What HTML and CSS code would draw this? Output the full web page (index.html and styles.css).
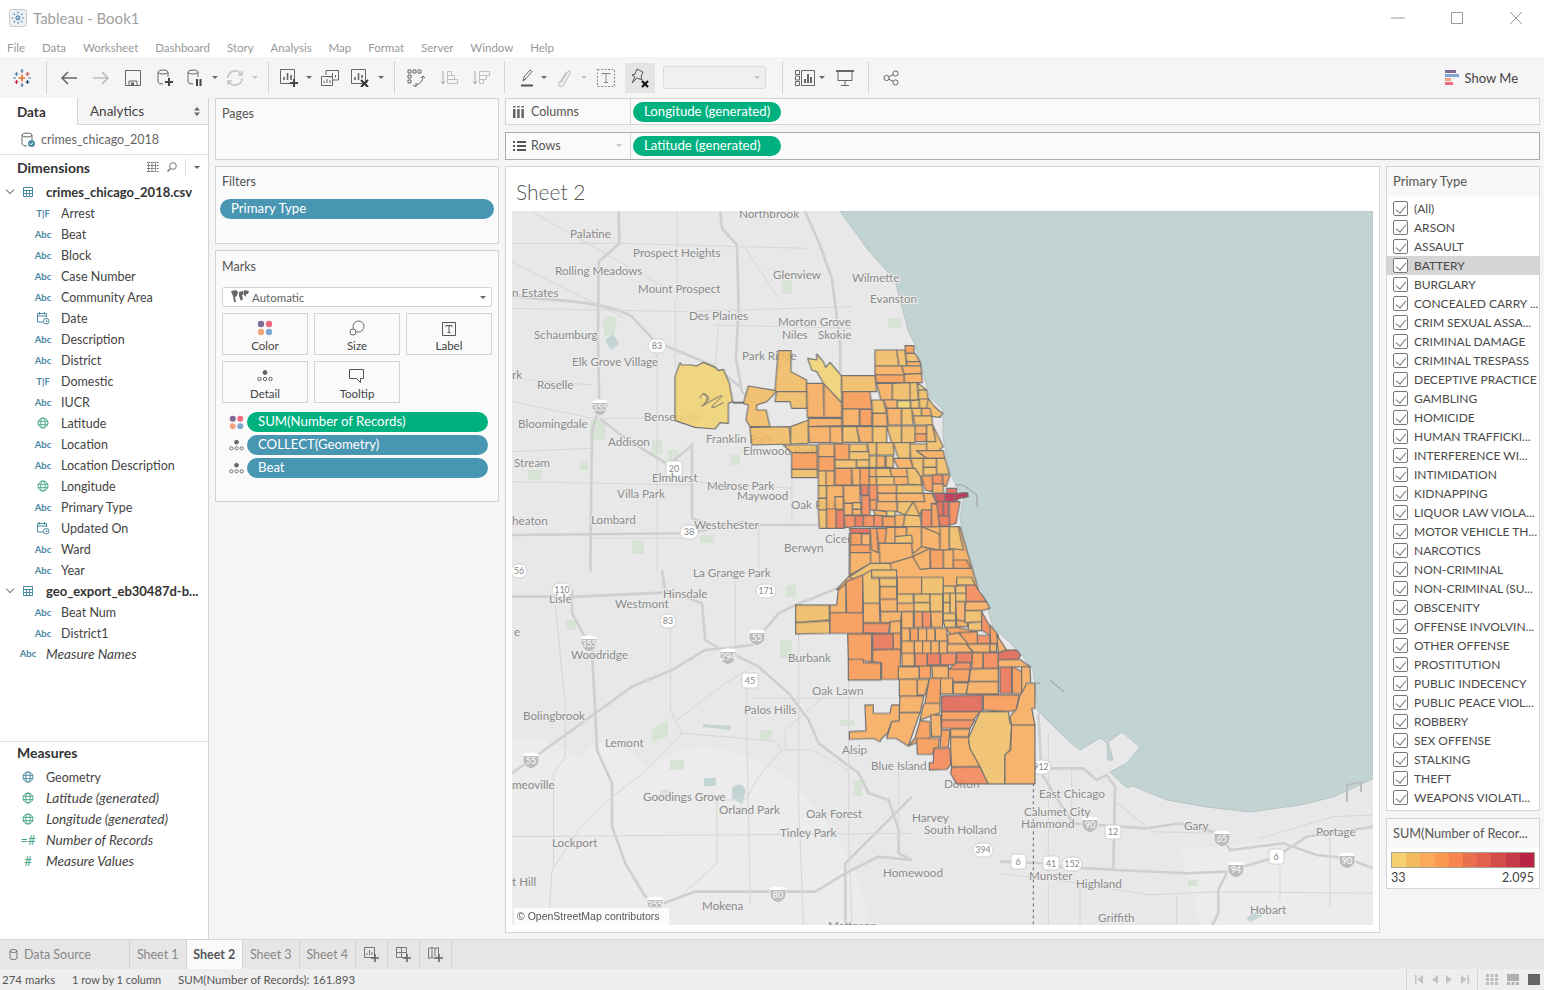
FILE: index.html
```html
<!DOCTYPE html>
<html lang="en">
<head>
    <meta charset="UTF-8">
    <title>Tableau - Book1</title>
    <link rel="stylesheet" href="styles.css">
</head>
<body>
<svg class="defs" width="0" height="0">
    <symbol id="dots" viewBox="0 0 16 16">
        <circle cx="4" cy="4" r="3.2" fill="#7f6a97"/><circle cx="12" cy="4" r="3.2" fill="#ef6a7f"/>
        <circle cx="4" cy="12" r="3.2" fill="#f2a57c"/><circle cx="12" cy="12" r="3.2" fill="#7ea6d1"/>
    </symbol>
    <symbol id="detail" viewBox="0 0 16 16" fill="none" stroke="#666">
        <circle cx="8" cy="4.5" r="2" fill="#666"/>
        <circle cx="2.5" cy="11" r="1.7"/><circle cx="8" cy="11" r="1.7"/><circle cx="13.5" cy="11" r="1.7"/>
    </symbol>
    <symbol id="globe" viewBox="0 0 12 12" fill="none" stroke="currentColor" stroke-width="1">
        <circle cx="6" cy="6" r="5"/><ellipse cx="6" cy="6" rx="2.2" ry="5"/><path d="M1 4.3h10M1 7.7h10"/>
    </symbol>
    <symbol id="cal" viewBox="0 0 14 14" fill="none" stroke="#4b8aa3" stroke-width="1">
        <path d="M7 11H1.5V2.5h9V6M1.5 5h9M3.5 1v2.5M8.5 1v2.5"/><circle cx="10.2" cy="10.2" r="2.8"/><path d="M10.2 8.8v1.6h1.4"/>
    </symbol>
    <symbol id="tbl" viewBox="0 0 12 12" fill="none" stroke="#4b8aa3">
        <path d="M1.5 1.5h9v9h-9zM1.5 4.5h9M1.5 7.5h9M4.5 4.5v6M7.5 4.5v6"/>
    </symbol>
    <symbol id="int" viewBox="0 0 18 18">
        <path d="M1 3 Q9 0 17 3 L17 10 Q17 15 9 18 Q1 15 1 10Z" fill="#bdbdbd" stroke="#f2f2f2"/>
        <path d="M1.5 3 Q9 .5 16.500 3 V5 H1.500Z" fill="#fff"/>
    </symbol>
</svg>

<header class="titlebar">
    <svg class="app-icon" viewBox="0 0 18 18" width="18" height="18">
        <rect x=".5" y=".5" width="17" height="17" rx="2" fill="#eef1f4" stroke="#c9c9c9"/>
        <path d="M9 2.500v13M2.500 9h13M4.500 4.500l9 9M13.500 4.500l-9 9" stroke="#5b8fb5" stroke-width="1.200" stroke-dasharray="2 1.500"/>
    </svg>
    <span class="app-title">Tableau - Book1</span>
    <div class="win-btns">
        <svg viewBox="0 0 14 14" width="14" height="14"><path d="M0 7h14" stroke="#999"/></svg>
        <svg viewBox="0 0 14 14" width="14" height="14"><path d="M1.500 1.500h11v11h-11z" fill="none" stroke="#999"/></svg>
        <svg viewBox="0 0 14 14" width="14" height="14"><path d="M1 1l12 12M13 1L1 13" stroke="#999"/></svg>
    </div>
</header>

<nav class="menubar">
    <span>File</span><span>Data</span><span>Worksheet</span><span>Dashboard</span><span>Story</span><span>Analysis</span><span>Map</span><span>Format</span><span>Server</span><span>Window</span><span>Help</span>
</nav>

<div class="toolbar">
    <div class="tb w30">
        <svg viewBox="0 0 18 18" width="18" height="18" stroke-width="1.200">
            <path d="M9 5.500v7M5.500 9h7" stroke="#e8762c" stroke-width="1.600"/>
            <path d="M9 0v4M7.500 2h3M9 14v4M7.500 16h3" stroke="#5b7fa6"/>
            <path d="M3.500 3v4M1.500 5h4" stroke="#59879b"/><path d="M14.500 3v4M12.500 5h4" stroke="#d24b55"/>
            <path d="M3.500 11v4M1.500 13h4" stroke="#c72035"/><path d="M14.500 11v4M12.500 13h4" stroke="#1f447a"/>
            <path d="M0 9h3M15 9h3" stroke="#4f7fa8"/>
        </svg>
    </div>
    <i class="sep s1"></i>
    <div class="tb w32"><svg viewBox="0 0 18 16" width="18" height="16"><path d="M17 8H2M8 2L2 8l6 6" fill="none" stroke="#666" stroke-width="1.600"/></svg></div>
    <div class="tb w32"><svg viewBox="0 0 18 16" width="18" height="16"><path d="M1 8h15M10 2l6 6-6 6" fill="none" stroke="#bbb" stroke-width="1.600"/></svg></div>
    <div class="tb w32"><svg viewBox="0 0 16 16" width="16" height="16"><path d="M.5.500h15v15H.5zM4 15.500V11h8v4.500" fill="none" stroke="#666"/><rect x="6" y="12.500" width="3" height="3" fill="#666"/></svg></div>
    <div class="tb w32"><svg viewBox="0 0 16 18" width="16" height="18" fill="none" stroke="#666"><ellipse cx="6" cy="3" rx="5" ry="2"/><path d="M1 3v10q0 2 5 2M11 3v5"/><path d="M12 9v8M8 13h8" stroke="#444" stroke-width="2"/></svg></div>
    <div class="tb w28"><svg viewBox="0 0 16 18" width="16" height="18" fill="none" stroke="#666"><ellipse cx="6" cy="3" rx="5" ry="2"/><path d="M1 3v10q0 2 5 2M11 3v5"/><path d="M10 10v7M13.500 10v7" stroke="#444" stroke-width="2"/></svg></div>
    <div class="tb w12"><i class="caret"></i></div>
    <div class="tb w28"><svg viewBox="0 0 18 18" width="18" height="18" fill="none" stroke="#c4c4c4" stroke-width="1.500"><path d="M2 9a7 7 0 0 1 12-5l2 2M16 9a7 7 0 0 1-12 5l-2-2M16 2v4h-4M2 16v-4h4"/></svg></div>
    <div class="tb w12"><i class="caret off"></i></div>
    <i class="sep s2"></i>
    <div class="tb w32"><svg viewBox="0 0 18 18" width="18" height="18" fill="none" stroke="#666"><path d="M.5.500h14v14H.5z"/><path d="M4 11V8M7.500 11V4M11 11V6" stroke-width="1.600"/><path d="M14 10v8M10 14h8" stroke="#444" stroke-width="2"/></svg></div>
    <div class="tb w8"><i class="caret"></i></div>
    <div class="tb w34"><svg viewBox="0 0 18 16" width="18" height="16" fill="none" stroke="#666"><path d="M5 5V.500h12.500V10H12"/><path d="M.5 6.500h11v9H.5z" fill="#f5f5f5"/><path d="M3 13v-2M6 13v-4M9 13v-3M9 8V6M11.500 7.500V3M14.500 7.500V5"/></svg></div>
    <div class="tb w26"><svg viewBox="0 0 18 18" width="18" height="18" fill="none" stroke="#666"><path d="M.5.500h14v14H.5z"/><path d="M4 11V8M7.500 11V4M11 9V6" stroke-width="1.600"/><path d="M10 11l7 7M17 11l-7 7" stroke="#333" stroke-width="2"/></svg></div>
    <div class="tb w16"><i class="caret"></i></div>
    <i class="sep s3"></i>
    <div class="tb w32"><svg viewBox="0 0 18 18" width="18" height="18" fill="none" stroke="#666"><path d="M1 1h3v3H1zM6 1h3v3H6zM11 1h3v3h-3zM1 6h3v3H1zM1 11h3v3H1z"/><path d="M16 7q0 7-7 9M6 16l3 2v-4M14 9l2-2 2 2"/></svg></div>
    <div class="tb w33"><svg viewBox="0 0 18 16" width="18" height="16" fill="none" stroke="#c0c0c0"><path d="M3 1v13M1 11l2 3 2-3" stroke="#aaa"/><path d="M7.500 1.500h4v4h-4zM7.500 5.500h7v4h-7zM7.500 9.500h10v4h-10z"/></svg></div>
    <div class="tb w32"><svg viewBox="0 0 18 16" width="18" height="16" fill="none" stroke="#c0c0c0"><path d="M3 1v13M1 11l2 3 2-3" stroke="#aaa"/><path d="M7.500 1.500h10v4h-10zM7.500 5.500h7v4h-7zM7.500 9.500h4v4h-4z"/></svg></div>
    <i class="sep s4"></i>
    <div class="tb w28"><svg viewBox="0 0 14 18" width="14" height="18" fill="none" stroke="#666"><path d="M3 12l1-4 6-7 2 1.500-6 7zM3 12l3-2.500"/><path d="M1 16.500h12" stroke="#555" stroke-width="2"/></svg></div>
    <div class="tb w6"><i class="caret"></i></div>
    <div class="tb w34"><svg viewBox="0 0 14 18" width="14" height="18" fill="none" stroke="#c4c4c4" stroke-width="1.200"><path d="M4 14l6-10q2-3 3-1.500t-1 4l-6 10q-3 2-4 0t1-4l6-9"/></svg></div>
    <div class="tb w6"><i class="caret off"></i></div>
    <div class="tb w38"><svg viewBox="0 0 18 18" width="18" height="18" fill="none" stroke="#888"><path d="M.5.500h17v17H.5z" stroke-dasharray="2 1.500"/><path d="M5 5.500v-1h8v1M9 4.500v9M7 13.500h4"/></svg></div>
    <div class="tb w30 picked"><svg viewBox="0 0 20 20" width="20" height="20" fill="none" stroke="#555"><path d="M7 1l6 3-2 5 1 3-5-2-5 5 3-6-3-2 3-1z"/><path d="M12 13l6 6M18 13l-6 6" stroke="#111" stroke-width="2.200"/></svg></div>
    <div class="fit-select"><i class="caret off"></i></div>
    <i class="sep s5"></i>
    <div class="tb w28"><svg viewBox="0 0 20 16" width="20" height="16" fill="none" stroke="#666"><path d="M.5.500h4v4h-4zM.5 6h4v4h-4zM.5 11.500h4v4h-4zM6.500.5h13v15h-13z"/><path d="M10 13V9M13 13V4M16 13V7" stroke-width="2"/></svg></div>
    <div class="tb w6"><i class="caret"></i></div>
    <div class="tb w22 ml9"><svg viewBox="0 0 18 16" width="18" height="16" fill="none" stroke="#666"><path d="M0 1h18" stroke-width="2"/><path d="M2 1v9.500h14V1M9 10.500V15M5 15.500h8"/></svg></div>
    <i class="sep s6"></i>
    <div class="tb w30"><svg viewBox="0 0 16 16" width="16" height="16" fill="none" stroke="#666"><circle cx="3.500" cy="8" r="2.600"/><circle cx="12.500" cy="3.500" r="2.600"/><circle cx="12.500" cy="12.500" r="2.600"/><path d="M5.800 6.800l4.400-2.200M5.800 9.200l4.400 2.200"/></svg></div>
    <div class="show-me">
        <svg viewBox="0 0 14 15" width="14" height="15"><rect width="11" height="3" fill="#7f6a97"/><rect y="4" width="14" height="3" fill="#7ea6d1"/><rect y="8" width="6" height="3" fill="#f2a57c"/><rect y="12" width="8" height="3" fill="#ef6a7f"/></svg>
        <span>Show Me</span>
    </div>
</div>

<div class="workspace">
    <aside class="side">
        <div class="side-tabs">
            <span class="side-tab active">Data</span>
            <span class="side-tab">Analytics
                <svg class="updown" viewBox="0 0 6 9" width="6" height="9" fill="#666"><path d="M3 0l3 3.500H0zM3 9L0 5.500h6z"/></svg>
            </span>
        </div>
        <div class="source">
            <svg viewBox="0 0 14 15" width="14" height="15" fill="none" stroke="#666"><ellipse cx="6" cy="3" rx="5" ry="2"/><path d="M1 3v9q0 2 5 2M11 3v5"/><circle cx="10.500" cy="11.500" r="3.500" fill="#4b8aa3" stroke="none"/><path d="M8.800 11.500l1.200 1.300 2-2.300" stroke="#fff"/></svg>
            <span>crimes_chicago_2018</span>
        </div>
        <div class="pane-head">
            <b>Dimensions</b>
            <svg class="pane-ico" viewBox="0 0 12 10" width="12" height="10" fill="none" stroke="#777"><path d="M0 .5h12M0 3.500h12M0 6.500h12M0 9.500h12M1.500 0v10M5 0v10M8.500 0v10" stroke-dasharray="1.500 .5"/></svg>
            <svg class="pane-ico" viewBox="0 0 10 10" width="10" height="10" fill="none" stroke="#777"><circle cx="6" cy="4" r="3.300"/><path d="M3.500 6.500L.5 9.500" stroke-width="1.500"/></svg>
            <i class="pane-sep"></i>
            <i class="caret"></i>
        </div>
        <ul class="tree dims">
            <li class="group"><i class="chev"></i><svg class="grp-ico"><use href="#tbl"/></svg><span>crimes_chicago_2018.csv</span></li>
            <li><em class="typ">T|F</em><span>Arrest</span></li>
            <li><em class="typ">Abc</em><span>Beat</span></li>
            <li><em class="typ">Abc</em><span>Block</span></li>
            <li><em class="typ">Abc</em><span>Case Number</span></li>
            <li><em class="typ">Abc</em><span>Community Area</span></li>
            <li><em class="typ"><svg class="typ-ico"><use href="#cal"/></svg></em><span>Date</span></li>
            <li><em class="typ">Abc</em><span>Description</span></li>
            <li><em class="typ">Abc</em><span>District</span></li>
            <li><em class="typ">T|F</em><span>Domestic</span></li>
            <li><em class="typ">Abc</em><span>IUCR</span></li>
            <li><em class="typ geo"><svg class="typ-ico small"><use href="#globe"/></svg></em><span>Latitude</span></li>
            <li><em class="typ">Abc</em><span>Location</span></li>
            <li><em class="typ">Abc</em><span>Location Description</span></li>
            <li><em class="typ geo"><svg class="typ-ico small"><use href="#globe"/></svg></em><span>Longitude</span></li>
            <li><em class="typ">Abc</em><span>Primary Type</span></li>
            <li><em class="typ"><svg class="typ-ico"><use href="#cal"/></svg></em><span>Updated On</span></li>
            <li><em class="typ">Abc</em><span>Ward</span></li>
            <li><em class="typ">Abc</em><span>Year</span></li>
            <li class="group"><i class="chev"></i><svg class="grp-ico"><use href="#tbl"/></svg><span>geo_export_eb30487d-b...</span></li>
            <li><em class="typ">Abc</em><span>Beat Num</span></li>
            <li><em class="typ">Abc</em><span>District1</span></li>
            <li class="top gen"><em class="typ">Abc</em><span>Measure Names</span></li>
        </ul>
        <div class="pane-head measures"><b>Measures</b></div>
        <ul class="tree meas">
            <li class="top"><em class="typ"><svg class="typ-ico small"><use href="#globe"/></svg></em><span>Geometry</span></li>
            <li class="top gen"><em class="typ geo"><svg class="typ-ico small"><use href="#globe"/></svg></em><span>Latitude (generated)</span></li>
            <li class="top gen"><em class="typ geo"><svg class="typ-ico small"><use href="#globe"/></svg></em><span>Longitude (generated)</span></li>
            <li class="top gen"><em class="typ geo big-sym">=#</em><span>Number of Records</span></li>
            <li class="top gen"><em class="typ geo big-sym">#</em><span>Measure Values</span></li>
        </ul>
    </aside>

    <section class="cards">
        <div class="card pages"><h4>Pages</h4></div>
        <div class="card filters">
            <h4>Filters</h4>
            <div class="pill blue">Primary Type</div>
        </div>
        <div class="card marks">
            <h4>Marks</h4>
            <div class="mark-type">
                <svg viewBox="0 0 18 14" width="18" height="14" fill="#666"><path d="M0 1l5-1 2 2-1 4-2 1 1 5-2 0-1-6zM8 2l4-1 1 3-2 1 1 4-2 2-2-5zM13 0l5 1-1 3-2 0 0 3-2-2z"/></svg>
                <span>Automatic</span>
                <i class="caret"></i>
            </div>
            <div class="mark-btns">
                <div class="mark-btn"><svg viewBox="0 0 16 16" width="16" height="16"><use href="#dots"/></svg><span>Color</span></div>
                <div class="mark-btn"><svg viewBox="0 0 16 16" width="16" height="16" fill="none" stroke="#666"><circle cx="9.500" cy="6.500" r="5.500"/><circle cx="4" cy="12" r="3" fill="#fafafa"/></svg><span>Size</span></div>
                <div class="mark-btn"><svg viewBox="0 0 14 14" width="14" height="14" fill="none" stroke="#555"><path d="M.5.500h13v13H.5zM4 5V3.500h6V5M7 3.500v7M5.500 10.500h3"/></svg><span>Label</span></div>
                <div class="mark-btn"><svg viewBox="0 0 16 16" width="16" height="16"><use href="#detail"/></svg><span>Detail</span></div>
                <div class="mark-btn"><svg viewBox="0 0 16 16" width="16" height="16" fill="none" stroke="#555"><path d="M.5 1.500h14v9h-3v4l-4-4h-7z"/></svg><span>Tooltip</span></div>
            </div>
            <div class="mark-row"><svg viewBox="0 0 16 16" width="15" height="15"><use href="#dots"/></svg><div class="pill green">SUM(Number of Records)</div></div>
            <div class="mark-row"><svg viewBox="0 0 16 16" width="15" height="15"><use href="#detail"/></svg><div class="pill blue">COLLECT(Geometry)</div></div>
            <div class="mark-row"><svg viewBox="0 0 16 16" width="15" height="15"><use href="#detail"/></svg><div class="pill blue">Beat</div></div>
        </div>
    </section>

    <section class="view">
        <div class="shelf">
            <div class="shelf-label">
                <svg viewBox="0 0 11 12" width="11" height="12" fill="#666"><path d="M0 3h2.500v9H0zM4.200 3h2.500v9H4.200zM8.400 3h2.500v9H8.400zM0 0h2.500v1.500H0zM4.200 0h2.500v1.500H4.200zM8.400 0h2.500v1.500H8.400z"/></svg>
                <span>Columns</span>
            </div>
            <div class="pill green">Longitude (generated)</div>
        </div>
        <div class="shelf rows">
            <div class="shelf-label">
                <svg viewBox="0 0 13 10" width="13" height="10" fill="#555"><path d="M0 0h2v2H0zM0 4h2v2H0zM0 8h2v2H0zM4 0h9v2H4zM4 4h9v2H4zM4 8h9v2H4z"/></svg>
                <span>Rows</span>
                <i class="caret off"></i>
            </div>
            <div class="pill green">Latitude (generated)</div>
        </div>
        <div class="canvas">
            <div class="sheet">
                <h2>Sheet 2</h2>
                <svg class="map" viewBox="512 211 861 714" width="861" height="714">
                    <rect x="512" y="211" width="861" height="714" fill="#e8e8e8"/>
                    <g fill="#ececec">
                        <path d="M512 740Q540 730 580 760 600 720 650 770 700 720 790 780 860 850 870 925H512Z"/>
                        <path d="M1180 850Q1290 840 1373 830V925H1200Z"/>
                    </g>
                    <g fill="#d7e3d4">
                        <path d="M603 320q8-8 14 0l-3 16-10 0zM632 540h12v14h-12zM786 585h10v12h-10zM700 535h14v8h-14zM668 450h10v18h-10zM730 455h10v10h-10zM652 440h10v14h-10zM580 460h8v10h-8zM760 730h12v10h-12zM660 790h10v10h-10zM854 780h8v16h-8zM840 720h14v6h-14zM652 730l16-10v16l-16 6zM670 760h14v10h-14zM528 470h14v10h-14zM590 420h16v20h-16zM888 318h14v10h-14zM782 280h10v14h-10zM566 620h10v10h-10zM780 640h12v18h-12zM1188 880h10v6h-10z"/>
                    </g>
                    <g fill="#c3d4d4">
                        <path d="M605 340l8-6 6 10-8 6zM703 724l28 2 0 4-28-3zM704 778h12v8h-12zM732 788q8-8 14 2l-4 14-10-6z"/>
                        <path d="M1246 918q12-8 22-12l-6 10-12 6z"/>
                    </g>
                    <path class="water" d="M840 211 868 250 895 280 908 330 915 345 930 397 943 410 943 437 950 473 957 487 964 497 960 517 962 530 965 560 970 570 983 593 993 627 1007 640 1020 653 1033 670 1037 703 1037 710 1050 723 1070 742 1080 750 1100 738 1107 743 1108 760 1113 760 1108 742 1122 732 1140 747 1127 763 1110 772 1127 788 1133 786 1167 800 1207 807 1250 812 1300 805 1333 797 1373 779 1373 211Z"/>
                    <path class="pier" d="M1347 802v-17l14-3v10"/>

                    <g class="roads" transform="translate(512 205) scale(.3333)">
                        <path class="hw" d="M0 275C150 285 300 295 360 335L430 410 600 480 690 550"/>
                        <path class="hw" d="M320 20 322 115 260 170 258 400 262 600 240 680 235 1100"/>
                        <path class="hw" d="M625 20 630 70 675 120 680 300 672 460 690 560 720 590"/>
                        <path class="hw" d="M262 640 340 700 470 780 540 720 540 940 600 960 920 960"/>
                        <path class="hw" d="M0 990 530 985 700 950"/>
                        <path class="hw" d="M880 20 920 110 960 220 985 420 985 500"/>
                        <path class="rd" d="M0 115H310M320 115 880 130M0 310 520 320 1020 305M0 170 340 340M60 20 480 260M490 290V490M435 400V1100M0 520 240 540M600 360 1020 370M0 830 540 840M700 130 800 280M495 20V280M0 590 240 640 430 640M240 1000H540M0 740 240 730M620 360 610 480 660 580M550 830 840 850M840 760V960M740 960V1100"/>
                    </g>
                    <g class="roads" transform="translate(512 570) scale(.3333)">
                        <path class="hw" d="M0 610 250 430 360 350 480 300 580 240 640 235 720 225 800 130 850 105 990 50"/>
                        <path class="hw" d="M240 240 250 430 255 540 300 640 300 770 340 880 400 980 440 1010"/>
                        <path class="hw" d="M640 240 740 290 830 370 890 450 920 520 1000 580 1040 610 1070 670 1130 690 1160 780 1160 850 1200 870"/>
                        <path class="hw" d="M440 1005 550 965 910 965 1000 910 1100 860 1200 870"/>
                        <path class="hw" d="M180 60 180 130 240 240M0 80H200L450 68M450 0 460 60 570 100 580 210 620 235M1000 1060V880L1200 680"/>
                        <path class="rd" d="M475 130V420L510 490 700 505 790 515 810 540 900 540 1010 600M510 490 380 620 300 680 200 780 120 900 110 1060M860 190V700L875 1070M705 340V520L715 1000M1010 190V800L1020 1070M615 690V880L510 975M0 800 615 795 1200 790M810 540 740 620 700 690 610 690M495 450 640 340 720 290M130 110 160 400 160 560 125 610V900M720 385H1200M820 530V480L930 385M450 0V60M670 20V230M1160 600V800"/>
                    </g>
                    <g class="roads" transform="translate(1000 700) scale(.3333)">
                        <path class="hw" d="M115 40 125 220 180 310 220 370 440 385 540 370 660 400 690 450 850 430 950 465 1040 475 1120 505"/>
                        <path class="hw" d="M125 205H250L290 240 320 225 345 260 340 510"/>
                        <path class="hw" d="M0 485 130 490 170 500 350 510 560 520 680 515 830 470 920 410 1120 380"/>
                        <path class="hw" d="M680 520 655 570V640L635 680"/>
                        <path class="rd" d="M0 520 240 550 450 585 650 575 1120 580M215 210V350M240 550V680M145 100V680M340 300 440 380M780 415 1000 350 1120 345M450 395 660 400M840 500V600M530 590V680M990 400V620"/>
                        <path class="state" d="M100 250V680"/>
                    </g>

                    <g class="shields">
                        <use href="#int" x="591" y="398" width="18" height="18"/><text class="on-int" x="600" y="411">355</text>
                        <use href="#int" x="580" y="634" width="18" height="18"/><text class="on-int" x="589" y="647">355</text>
                        <use href="#int" x="748" y="628" width="18" height="18"/><text class="on-int" x="757" y="641">55</text>
                        <use href="#int" x="718" y="647" width="20" height="18"/><text class="on-int" x="728" y="660">294</text>
                        <use href="#int" x="522" y="751" width="18" height="18"/><text class="on-int" x="531" y="764">55</text>
                        <use href="#int" x="646" y="895" width="18" height="18"/><text class="on-int" x="655" y="908">355</text>
                        <use href="#int" x="769" y="885" width="18" height="18"/><text class="on-int" x="778" y="898">80</text>
                        <use href="#int" x="1081" y="815" width="18" height="18"/><text class="on-int" x="1090" y="828">90</text>
                        <use href="#int" x="1213" y="829" width="18" height="18"/><text class="on-int" x="1222" y="842">65</text>
                        <use href="#int" x="1227" y="860" width="18" height="18"/><text class="on-int" x="1236" y="873">94</text>
                        <use href="#int" x="1338" y="851" width="18" height="18"/><text class="on-int" x="1347" y="864">90</text>
                        <rect x="648" y="339" width="18" height="14" rx="7"/><text x="657" y="349">83</text>
                        <rect x="666" y="461" width="16" height="15" rx="2"/><text x="674" y="472">20</text>
                        <rect x="680" y="525" width="18" height="14" rx="7"/><text x="689" y="535">38</text>
                        <rect x="511" y="564" width="16" height="14" rx="7"/><text x="519" y="574">56</text>
                        <rect x="552" y="583" width="20" height="14" rx="7"/><text x="562" y="593">110</text>
                        <rect x="756" y="584" width="20" height="14" rx="7"/><text x="766" y="594">171</text>
                        <rect x="660" y="614" width="16" height="14" rx="7"/><text x="668" y="624">83</text>
                        <rect x="742" y="673" width="16" height="15" rx="2"/><text x="750" y="684">45</text>
                        <rect x="973" y="843" width="20" height="14" rx="7"/><text x="983" y="853">394</text>
                        <rect x="1032" y="760" width="19" height="14" rx="7"/><text x="1041" y="770">912</text>
                        <rect x="1105" y="825" width="16" height="14" rx="3"/><text x="1113" y="835">12</text>
                        <rect x="1011" y="854" width="15" height="15" rx="3"/><text x="1018" y="865">6</text>
                        <rect x="1043" y="856" width="16" height="14" rx="3"/><text x="1051" y="867">41</text>
                        <rect x="1062" y="857" width="20" height="14" rx="7"/><text x="1072" y="867">152</text>
                        <rect x="1269" y="849" width="15" height="15" rx="3"/><text x="1276" y="860">6</text>
                    </g>

                    <g class="labels">
                        <text x="739" y="218">Northbrook</text><text x="570" y="238">Palatine</text><text x="633" y="257">Prospect Heights</text>
                        <text x="555" y="275">Rolling Meadows</text><text x="773" y="279">Glenview</text><text x="852" y="282">Wilmette</text>
                        <text x="512" y="297">n Estates</text><text x="638" y="293">Mount Prospect</text><text x="870" y="303">Evanston</text>
                        <text x="689" y="320">Des Plaines</text><text x="778" y="326">Morton Grove</text><text x="534" y="339">Schaumburg</text>
                        <text x="782" y="339">Niles</text><text x="818" y="339">Skokie</text><text x="742" y="360">Park Ridge</text>
                        <text x="572" y="366">Elk Grove Village</text><text x="537" y="389">Roselle</text><text x="512" y="379">rk</text>
                        <text x="644" y="421">Bensenville</text><text x="518" y="428">Bloomingdale</text><text x="608" y="446">Addison</text>
                        <text x="706" y="443">Franklin Park</text><text x="743" y="455">Elmwood Park</text><text x="514" y="467">Stream</text>
                        <text x="652" y="482">Elmhurst</text><text x="707" y="490">Melrose Park</text><text x="737" y="500">Maywood</text>
                        <text x="617" y="498">Villa Park</text><text x="791" y="509">Oak Park</text><text x="512" y="525">heaton</text>
                        <text x="591" y="524">Lombard</text><text x="694" y="529">Westchester</text><text x="825" y="543">Cicero</text>
                        <text x="784" y="552">Berwyn</text><text x="693" y="577">La Grange Park</text><text x="549" y="603">Lisle</text>
                        <text x="663" y="598">Hinsdale</text><text x="615" y="608">Westmont</text><text x="514" y="636">e</text>
                        <text x="571" y="659">Woodridge</text><text x="788" y="662">Burbank</text><text x="812" y="695">Oak Lawn</text>
                        <text x="744" y="714">Palos Hills</text><text x="523" y="720">Bolingbrook</text><text x="605" y="747">Lemont</text>
                        <text x="842" y="754">Alsip</text><text x="871" y="770">Blue Island</text><text x="944" y="788">Dolton</text>
                        <text x="512" y="789">meoville</text><text x="643" y="801">Goodings Grove</text><text x="719" y="814">Orland Park</text>
                        <text x="1039" y="798">East Chicago</text><text x="806" y="818">Oak Forest</text><text x="912" y="822">Harvey</text>
                        <text x="1024" y="816">Calumet City</text><text x="924" y="834">South Holland</text><text x="1021" y="828">Hammond</text>
                        <text x="780" y="837">Tinley Park</text><text x="1184" y="830">Gary</text><text x="1316" y="836">Portage</text>
                        <text x="552" y="847">Lockport</text><text x="883" y="877">Homewood</text><text x="1029" y="880">Munster</text>
                        <text x="1076" y="888">Highland</text><text x="512" y="886">t Hill</text><text x="702" y="910">Mokena</text>
                        <text x="1250" y="914">Hobart</text><text x="1098" y="922">Griffith</text><text x="828" y="930">Matteson</text>
                    </g>

                    <g class="beats">
                        <g transform="translate(660 330) scale(.3333)">
                            <polygon class="c1" points="45,140 60,98 65,105 95,105 110,108 130,97 165,112 175,122 190,118 208,160 218,215 205,220 205,280 180,278 165,297 105,292 45,272"/>
                            <path class="squig" d="M120 205Q125 185 140 195T132 222 158 210 170 215 190 218M128 190Q150 200 135 220"/>
                            <path class="conn" d="M218 218H250"/>
                            <polygon class="c2" points="265,168 348,182 345,190 330,205 320,215 290,225 290,240 318,240 330,290 270,290 258,270 265,225 250,220"/>
                            <polygon class="c2" points="270,292 388,290 392,342 275,345"/>
                            <polygon class="c2" points="355,62 393,62 393,125 440,150 440,185 350,185 345,182"/>
                            <polygon class="c2" points="350,185 440,185 440,235 395,235 390,215 345,215"/>
                            <polygon class="c3" points="440,160 490,160 492,262 442,262"/>
                            <polygon class="c3" points="492,160 545,218 545,262 492,262"/>
                            <polygon class="c1" points="443,85 470,90 470,72 490,95 497,112 510,97 545,138 545,218 490,160 482,145 470,125 455,120"/>
                            <polygon class="c2" points="545,137 645,137 650,185 545,185"/>
                            <polygon class="c4" points="548,185 630,185 635,237 548,237"/>
                            <polygon class="c3" points="548,237 598,237 598,287 548,287"/>
                            <polygon class="c4" points="600,238 635,238 635,287 600,287"/>
                            <polygon class="c2" points="635,210 670,210 680,250 638,250"/>
                            <polygon class="c3" points="638,250 680,250 682,288 638,288"/>
                            <polygon class="c2" points="645,60 710,60 717,108 645,108"/>
                            <polygon class="c2" points="710,60 735,60 740,108 717,108"/>
                            <polygon class="c4" points="735,47 762,47 762,70 737,70"/>
                            <polygon class="c2" points="737,70 765,70 780,95 740,95"/>
                            <polygon class="c3" points="740,95 780,95 783,108 740,108"/>
                            <polygon class="c3" points="645,108 725,108 733,135 645,135"/>
                            <polygon class="c3" points="725,108 783,108 785,130 733,133"/>
                            <polygon class="c4" points="645,135 733,135 733,158 650,158"/>
                            <polygon class="c3" points="733,133 785,130 787,158 733,158"/>
                            <polygon class="c3" points="650,160 697,160 697,210 663,210"/>
                            <polygon class="c2" points="697,160 750,158 750,210 697,210"/>
                            <polygon class="c2" points="750,158 772,158 775,210 750,210"/>
                            <polygon class="c1" points="772,158 800,180 775,180"/>
                            <polygon class="c2" points="775,180 800,180 805,207 775,210"/>
                            <polygon class="c3" points="670,210 712,210 712,235 680,235"/>
                            <polygon class="c1" points="712,212 752,212 752,235 712,235"/>
                            <polygon class="c2" points="752,212 778,210 778,235 752,235"/>
                            <polygon class="c2" points="778,207 805,207 808,235 778,235"/>
                            <polygon class="c2" points="805,205 822,228 835,240 848,250 840,262 805,258 800,235"/>
                            <polygon class="c3" points="680,235 725,235 725,285 685,285"/>
                            <polygon class="c2" points="725,235 755,235 760,285 725,285"/>
                            <polygon class="c2" points="755,235 785,235 785,258 760,258"/>
                            <polygon class="c3" points="785,235 810,235 815,258 785,258"/>
                            <polygon class="c2" points="760,258 815,258 818,285 765,285"/>
                            <polygon class="c3" points="445,265 545,265 545,287 445,290"/>
                            <polygon class="c2" points="392,290 445,270 445,340 392,342"/>
                            <polygon class="c3" points="445,290 510,290 510,338 448,338"/>
                            <polygon class="c3" points="510,290 545,290 548,340 510,338"/>
                            <polygon class="c2" points="548,290 590,290 598,337 548,337"/>
                            <polygon class="c3" points="590,290 638,290 638,337 600,337"/>
                            <polygon class="c2" points="638,290 680,290 680,338 638,338"/>
                            <polygon class="c2" points="680,288 725,288 725,338 695,338"/>
                            <polygon class="c2" points="725,288 765,288 765,338 725,338"/>
                            <polygon class="c3" points="765,288 800,288 800,312 765,312"/>
                            <polygon class="c4" points="765,312 800,312 800,335 765,335"/>
                            <polygon class="c2" points="800,285 818,285 828,335 800,335"/>
                            <polygon class="c2" points="818,285 850,350 835,362 800,362 800,335 828,335"/>
                            <polygon class="c2" points="370,345 470,345 470,368 395,368"/>
                            <polygon class="c4" points="395,368 472,368 472,418 395,418"/>
                            <polygon class="c2" points="395,418 472,418 472,443 395,443"/>
                            <polygon class="c3" points="475,342 523,342 523,380 475,380"/>
                            <polygon class="c4" points="475,380 523,380 523,423 475,423"/>
                            <polygon class="c4" points="523,342 568,342 568,390 525,390"/>
                            <polygon class="c2" points="568,342 622,342 622,365 568,365"/>
                            <polygon class="c2" points="568,365 628,365 628,390 568,390"/>
                            <polygon class="c2" points="622,338 650,338 650,375 628,375"/>
                            <polygon class="c2" points="650,338 700,338 702,375 650,375"/>
                            <polygon class="c2" points="700,338 750,338 750,385 715,385"/>
                            <polygon class="c2" points="750,342 800,342 800,362 770,362 800,385 752,385"/>
                            <polygon class="c3" points="770,362 850,362 855,385 800,385"/>
                            <polygon class="c2" points="525,390 590,390 590,415 525,415"/>
                            <polygon class="c2" points="590,390 628,390 628,412 590,412"/>
                            <polygon class="c2" points="628,378 650,378 650,412 628,412"/>
                            <polygon class="c3" points="650,378 675,378 675,412 650,412"/>
                            <polygon class="c2" points="678,378 700,378 700,412 678,412"/>
                            <polygon class="c3" points="700,385 750,385 760,415 715,415"/>
                            <polygon class="c2" points="752,385 790,385 790,465 785,465 782,440 765,415 760,415"/>
                            <polygon class="c2" points="790,385 830,385 830,412 790,412"/>
                            <polygon class="c2" points="830,385 855,385 868,432 830,432"/>
                            <polygon class="c2" points="790,412 830,412 830,435 790,435"/>
                            <polygon class="c2" points="475,423 498,423 498,467 475,467"/>
                            <polygon class="c3" points="498,423 523,423 523,467 498,467"/>
                            <polygon class="c4" points="525,415 575,415 575,465 525,465"/>
                            <polygon class="c3" points="575,415 600,415 600,465 578,465"/>
                            <polygon class="c4" points="600,415 628,415 628,465 600,465"/>
                            <polygon class="c3" points="628,415 648,415 648,440 628,440"/>
                            <polygon class="c2" points="648,415 690,415 695,440 648,440"/>
                            <polygon class="c3" points="690,415 740,415 745,440 695,440"/>
                            <polygon class="c3" points="628,440 650,440 650,465 628,465"/>
                            <polygon class="c2" points="650,440 702,440 702,465 650,465"/>
                            <polygon class="c3" points="702,440 745,440 750,462 702,465"/>
                            <polygon class="c2" points="740,415 765,415 782,440 785,465 745,462"/>
                            <polygon class="c4" points="785,438 818,438 818,485 795,480"/>
                            <polygon class="c5" points="818,435 848,435 848,462 818,462"/>
                            <polygon class="c4" points="848,435 870,435 858,470 850,465"/>
                            <polygon class="c3" points="818,462 850,462 850,490 818,490"/>
                            <polygon class="c2" points="475,467 500,467 500,505 475,505"/>
                            <polygon class="c3" points="500,467 550,467 550,500 525,500 525,540 500,540"/>
                            <polygon class="c2" points="475,505 500,505 500,540 475,540"/>
                            <polygon class="c3" points="550,467 600,467 600,520 552,520"/>
                            <polygon class="c6" points="603,465 625,465 625,495 603,495"/>
                            <polygon class="c5" points="628,465 652,465 652,510 628,510"/>
                            <polygon class="c3" points="652,465 710,465 710,490 652,490"/>
                            <polygon class="c2" points="710,465 785,465 790,490 710,490"/>
                            <polygon class="c3" points="652,490 710,490 710,515 655,515"/>
                            <polygon class="c3" points="710,490 790,490 795,515 710,515"/>
                            <polygon class="c5" points="605,497 628,497 630,555 605,555"/>
                            <polygon class="c3" points="552,520 578,520 578,555 552,555"/>
                            <polygon class="c3" points="525,500 550,500 550,538 525,538"/>
                            <polygon class="c2" points="578,518 603,518 603,538 578,538"/>
                            <polygon class="c3" points="578,538 603,538 603,555 578,555"/>
                            <polygon class="c4" points="630,510 650,510 650,540 630,540"/>
                            <polygon class="c3" points="650,515 710,515 712,545 680,545 650,540"/>
                            <polygon class="c2" points="712,515 760,515 735,555 712,545"/>
                            <polygon class="c2" points="760,515 812,515 812,560 735,555"/>
                            <polygon class="c3" points="640,540 680,545 680,558 645,555"/>
                            <polygon class="c1" points="680,543 705,543 705,558 680,558"/>
                            <polygon class="c2" points="475,540 500,540 500,595 478,595"/>
                            <polygon class="c4" points="500,537 528,537 528,595 500,595"/>
                            <polygon class="c6" points="528,540 552,540 552,595 528,595"/>
                            <polygon class="c5" points="552,557 585,557 585,590 555,593"/>
                            <polygon class="c6" points="585,557 610,557 610,590 585,590"/>
                            <polygon class="c5" points="610,557 642,557 642,590 610,590"/>
                            <polygon class="c5" points="642,555 668,558 668,590 642,590"/>
                            <polygon class="c4" points="668,560 705,560 705,590 668,590"/>
                            <polygon class="c3" points="705,555 735,555 730,590 705,590"/>
                            <polygon class="c2" points="735,555 780,558 785,590 730,590"/>
                            <polygon class="c3" points="790,490 815,490 830,520 815,520 815,540 785,540 780,558 760,515 795,515"/>
                            <polygon class="c5" points="785,540 815,540 815,612 785,612"/>
                            <polygon class="c4" points="815,520 835,525 838,612 815,612"/>
                            <polygon class="c5" points="868,515 900,515 888,580 868,585"/>
                            <polygon class="c8" points="820,490 855,490 855,515 830,515"/>
                            <polygon class="c9" points="855,490 885,490 885,515 855,515"/>
                            <polygon class="c7" points="860,475 890,475 890,490 860,490"/>
                            <polygon class="c9" points="885,490 922,488 925,500 900,505 885,515"/>
                            <polygon class="c7" points="830,515 850,515 850,558 835,558"/>
                            <polygon class="c7" points="850,515 865,515 865,558 850,558"/>
                            <polygon class="c6" points="835,558 868,558 868,588 840,588"/>
                            <polygon class="c3" points="568,660 568,610 632,610 632,595 840,590 900,590 955,778 530,778 568,738"/>
                            <polygon class="c7" points="568,595 630,595 630,610 572,610"/>
                            <polygon class="c4" points="572,610 605,610 605,645 572,645"/>
                            <polygon class="c3" points="605,612 630,612 630,645 605,645"/>
                            <polygon class="c4" points="570,645 630,645 630,668 570,668"/>
                            <polygon class="c4" points="630,595 650,595 655,668 635,660"/>
                            <polygon class="c4" points="650,595 680,595 680,640 655,640"/>
                            <polygon class="c3" points="680,592 705,592 705,640 675,640"/>
                            <polygon class="c3" points="705,592 740,592 740,620 705,620"/>
                            <polygon class="c3" points="740,590 785,590 785,650 760,670 740,625"/>
                            <polygon class="c2" points="705,620 755,615 758,640 705,640"/>
                            <polygon class="c3" points="785,590 838,612 840,660 810,655 785,650"/>
                            <polygon class="c3" points="840,590 868,590 868,660 840,660"/>
                            <polygon class="c2" points="868,590 895,590 910,660 868,655"/>
                            <polygon class="c3" points="657,640 755,640 758,680 690,700 660,700"/>
                            <polygon class="c3" points="758,680 810,655 810,715 780,718"/>
                            <polygon class="c4" points="810,660 850,660 850,715 812,715"/>
                            <polygon class="c3" points="850,660 880,660 880,715 850,715"/>
                            <polygon class="c4" points="880,690 920,690 932,715 880,715"/>
                            <polygon class="c3" points="570,668 632,668 632,700 570,735"/>
                            <polygon class="c2" points="632,700 690,700 710,778 630,778 568,740"/>
                        </g>
                        <g transform="translate(780 570) scale(.3333)">
                            <polygon class="c2" points="47,105 148,105 148,150 47,158"/>
                            <polygon class="c2" points="47,158 148,152 150,190 47,192"/>
                            <polygon class="c4" points="150,128 250,128 250,190 150,190"/>
                            <polygon class="c3" points="150,128 198,128 198,40 175,60 170,105 150,105"/>
                            <polygon class="c4" points="198,35 248,15 248,128 200,128"/>
                            <polygon class="c2" points="248,15 275,0 275,25 298,25 298,100 250,100"/>
                            <polygon class="c3" points="250,100 298,100 300,158 250,158"/>
                            <polygon class="c2" points="298,25 350,25 350,50 300,50"/>
                            <polygon class="c3" points="300,50 350,50 350,88 300,88"/>
                            <polygon class="c3" points="300,88 352,88 352,125 302,125"/>
                            <polygon class="c3" points="302,125 365,125 362,152 330,158 302,158"/>
                            <polygon class="c2" points="275,0 350,0 350,22 275,22"/>
                            <polygon class="c3" points="352,22 425,22 425,72 352,72"/>
                            <polygon class="c2" points="425,22 490,22 490,72 425,72"/>
                            <polygon class="c2" points="352,72 400,72 400,100 352,100"/>
                            <polygon class="c2" points="402,72 450,72 450,98 402,98"/>
                            <polygon class="c2" points="450,72 488,72 488,125 450,125"/>
                            <polygon class="c3" points="352,100 402,100 402,125 352,125"/>
                            <polygon class="c2" points="402,98 450,98 450,125 402,125"/>
                            <polygon class="c2" points="490,48 525,48 525,70 490,70"/>
                            <polygon class="c2" points="527,48 558,45 558,70 527,70"/>
                            <polygon class="c2" points="490,70 510,70 510,98 490,98"/>
                            <polygon class="c2" points="510,70 527,70 527,130 510,130"/>
                            <polygon class="c2" points="527,70 560,70 560,95 527,95"/>
                            <polygon class="c2" points="490,98 510,98 510,130 490,130"/>
                            <polygon class="c2" points="490,130 527,130 527,152 490,152"/>
                            <polygon class="c2" points="490,152 527,152 527,172 495,172"/>
                            <polygon class="c2" points="530,22 575,22 585,45 530,45"/>
                            <polygon class="c3" points="527,95 555,95 555,158 530,150"/>
                            <polygon class="c3" points="530,150 560,155 565,170 530,170"/>
                            <polygon class="c5" points="558,45 585,45 620,95 558,95"/>
                            <polygon class="c3" points="558,95 620,95 630,115 605,122 555,122"/>
                            <polygon class="c2" points="555,122 605,122 605,155 555,158"/>
                            <polygon class="c2" points="565,158 605,155 605,182 565,182"/>
                            <polygon class="c5" points="605,125 630,170 640,190 630,195 605,180"/>
                            <polygon class="c5" points="592,196 630,196 630,220 592,220"/>
                            <polygon class="c4" points="535,185 592,185 592,220 560,222"/>
                            <polygon class="c4" points="630,165 655,195 655,220 632,220"/>
                            <polygon class="c4" points="495,175 530,172 590,185 535,188 515,195"/>
                            <polygon class="c3" points="502,195 535,188 565,222 505,220"/>
                            <polygon class="c3" points="365,125 400,125 400,175 365,175"/>
                            <polygon class="c4" points="403,125 427,125 427,172 403,172"/>
                            <polygon class="c5" points="428,125 452,125 452,172 428,172"/>
                            <polygon class="c3" points="452,125 488,125 488,172 455,172"/>
                            <polygon class="c3" points="365,175 390,175 390,213 365,213"/>
                            <polygon class="c4" points="390,175 415,175 415,213 392,213"/>
                            <polygon class="c3" points="415,175 440,175 440,213 415,213"/>
                            <polygon class="c3" points="440,175 465,175 465,213 440,213"/>
                            <polygon class="c3" points="465,175 500,175 502,213 467,213"/>
                            <polygon class="c3" points="365,213 403,213 403,250 365,250"/>
                            <polygon class="c3" points="403,213 428,213 428,250 403,250"/>
                            <polygon class="c3" points="428,213 453,213 453,250 428,250"/>
                            <polygon class="c3" points="453,213 478,213 478,250 453,250"/>
                            <polygon class="c3" points="478,213 502,213 502,250 478,250"/>
                            <polygon class="c3" points="502,222 560,222 578,247 502,247"/>
                            <polygon class="c3" points="560,222 630,222 630,247 580,247"/>
                            <polygon class="c3" points="630,222 650,222 650,245 630,245"/>
                            <polygon class="c3" points="650,195 680,240 655,247"/>
                            <polygon class="c5" points="250,160 330,160 325,190 250,188"/>
                            <polygon class="c3" points="330,155 362,152 362,190 330,190"/>
                            <polygon class="c4" points="203,192 275,192 275,275 205,268"/>
                            <polygon class="c6" points="278,192 340,192 340,238 278,238"/>
                            <polygon class="c4" points="340,190 362,190 362,238 340,238"/>
                            <polygon class="c4" points="278,240 362,238 360,290 355,328 305,328 305,278 278,275"/>
                            <polygon class="c4" points="205,268 250,268 250,278 302,280 302,330 205,330"/>
                            <polygon class="c3" points="366,250 403,250 403,288 366,288"/>
                            <polygon class="c5" points="405,250 442,250 442,288 405,288"/>
                            <polygon class="c6" points="442,250 480,250 480,285 442,285"/>
                            <polygon class="c5" points="482,250 528,250 528,285 482,285"/>
                            <polygon class="c6" points="530,248 578,248 575,278 530,278"/>
                            <polygon class="c4" points="578,248 610,248 608,295 575,295"/>
                            <polygon class="c5" points="610,248 655,248 655,295 610,295"/>
                            <polygon class="c7" points="655,250 680,240 710,240 722,255 715,268 655,270"/>
                            <polygon class="c3" points="655,270 720,268 750,290 655,292"/>
                            <polygon class="c5" points="530,278 572,278 570,298 505,298"/>
                            <polygon class="c4" points="505,298 570,298 565,335 505,335"/>
                            <polygon class="c3" points="355,290 418,290 418,325 355,328"/>
                            <polygon class="c4" points="418,288 452,288 452,325 418,325"/>
                            <polygon class="c3" points="455,288 505,288 505,325 458,325"/>
                            <polygon class="c3" points="572,298 655,295 655,335 567,335"/>
                            <polygon class="c3" points="562,335 655,335 655,372 560,372"/>
                            <polygon class="c3" points="520,338 565,338 558,372 520,372"/>
                            <polygon class="c3" points="480,325 518,325 518,372 482,372"/>
                            <polygon class="c3" points="358,328 412,328 412,378 358,378"/>
                            <polygon class="c3" points="412,328 448,328 435,375 412,375"/>
                            <polygon class="c4" points="448,325 482,325 480,400 435,400"/>
                            <polygon class="c6" points="660,292 695,292 695,370 660,370"/>
                            <polygon class="c4" points="697,290 725,305 725,370 697,370"/>
                            <polygon class="c3" points="725,290 750,290 752,335 725,370"/>
                            <polygon class="c3" points="725,370 740,340 765,340 765,415 755,415 765,465 695,465 690,440 710,415 720,375"/>
                            <polygon class="c7" points="485,378 607,375 607,425 485,425"/>
                            <polygon class="c4" points="610,375 718,375 708,420 685,425 610,420"/>
                            <polygon class="c3" points="360,378 432,378 420,428 358,428"/>
                            <polygon class="c3" points="435,400 480,400 480,428 420,450 430,405"/>
                            <polygon class="c3" points="360,428 420,428 385,528 348,505 320,505 335,455 355,450"/>
                            <polygon class="c3" points="255,405 280,405 280,430 330,430 335,405 358,405 358,452 335,455 322,490 305,505 300,515 280,505 208,508 208,485 258,482"/>
                            <polygon class="c4" points="420,452 450,455 450,495 455,500 385,528 405,505"/>
                            <polygon class="c3" points="452,435 482,435 485,500 455,500"/>
                            <polygon class="c4" points="485,425 600,425 580,450 485,450"/>
                            <polygon class="c5" points="485,450 585,450 570,475 485,475"/>
                            <polygon class="c3" points="512,477 570,477 565,500 512,500"/>
                            <polygon class="c4" points="485,480 510,480 505,532 480,532"/>
                            <polygon class="c4" points="410,505 478,505 475,532 462,535 458,553 412,553"/>
                            <polygon class="c3" points="512,502 565,502 570,535 600,590 515,590 512,540"/>
                            <polygon class="c5" points="462,535 510,535 512,585 500,598 448,600 448,578 460,578"/>
                            <polygon class="c5" points="515,592 600,590 625,642 530,642 512,610"/>
                            <polygon class="big" points="600,425 685,425 690,460 695,465 690,540 675,555 675,642 625,642 600,590 570,535 565,505 585,460"/>
                            <polygon class="c3" points="695,465 765,465 765,642 675,642 675,555 692,540"/>
                        </g>
                    </g>
                    <path class="stub" d="M1025 683h15M1050 680l14 12M955 485h8l14 10v12"/>
                    <rect x="514" y="908" width="155" height="17" fill="#fff" fill-opacity=".85"/>
                    <text class="osm" x="517" y="920">© OpenStreetMap contributors</text>
                </svg>
            </div>
            <div class="legends">
                <div class="legend filter-legend">
                    <div class="legend-head">Primary Type</div>
                    <ul class="checks">
                        <li><i class="chk"></i>(All)</li>
                        <li><i class="chk"></i>ARSON</li>
                        <li><i class="chk"></i>ASSAULT</li>
                        <li class="hot"><i class="chk"></i>BATTERY</li>
                        <li><i class="chk"></i>BURGLARY</li>
                        <li><i class="chk"></i>CONCEALED CARRY ...</li>
                        <li><i class="chk"></i>CRIM SEXUAL ASSA...</li>
                        <li><i class="chk"></i>CRIMINAL DAMAGE</li>
                        <li><i class="chk"></i>CRIMINAL TRESPASS</li>
                        <li><i class="chk"></i>DECEPTIVE PRACTICE</li>
                        <li><i class="chk"></i>GAMBLING</li>
                        <li><i class="chk"></i>HOMICIDE</li>
                        <li><i class="chk"></i>HUMAN TRAFFICKI...</li>
                        <li><i class="chk"></i>INTERFERENCE WI...</li>
                        <li><i class="chk"></i>INTIMIDATION</li>
                        <li><i class="chk"></i>KIDNAPPING</li>
                        <li><i class="chk"></i>LIQUOR LAW VIOLA...</li>
                        <li><i class="chk"></i>MOTOR VEHICLE TH...</li>
                        <li><i class="chk"></i>NARCOTICS</li>
                        <li><i class="chk"></i>NON-CRIMINAL</li>
                        <li><i class="chk"></i>NON-CRIMINAL (SU...</li>
                        <li><i class="chk"></i>OBSCENITY</li>
                        <li><i class="chk"></i>OFFENSE INVOLVIN...</li>
                        <li><i class="chk"></i>OTHER OFFENSE</li>
                        <li><i class="chk"></i>PROSTITUTION</li>
                        <li><i class="chk"></i>PUBLIC INDECENCY</li>
                        <li><i class="chk"></i>PUBLIC PEACE VIOL...</li>
                        <li><i class="chk"></i>ROBBERY</li>
                        <li><i class="chk"></i>SEX OFFENSE</li>
                        <li><i class="chk"></i>STALKING</li>
                        <li><i class="chk"></i>THEFT</li>
                        <li><i class="chk"></i>WEAPONS VIOLATI...</li>
                    </ul>
                </div>
                <div class="legend color-legend">
                    <div class="legend-head">SUM(Number of Recor...</div>
                    <div class="ramp"></div>
                    <div class="ramp-vals"><span>33</span><span>2.095</span></div>
                </div>
            </div>
        </div>
    </section>
</div>

<div class="tabs">
    <div class="tab src">
        <svg viewBox="0 0 9 11" width="9" height="11" fill="none" stroke="#777"><ellipse cx="4.500" cy="2" rx="3.500" ry="1.500"/><path d="M1 2v7q0 1.500 3.500 1.500T8 9V2"/></svg>
        <span>Data Source</span>
    </div>
    <div class="tab sh">Sheet 1</div>
    <div class="tab sh active">Sheet 2</div>
    <div class="tab sh">Sheet 3</div>
    <div class="tab sh">Sheet 4</div>
    <div class="tab add"><svg viewBox="0 0 16 16" width="16" height="16" fill="none" stroke="#777"><path d="M.5.500h10v10H.5zM3 8V6M5.500 8V3M8 8V5"/><path d="M11 7v8M7 11h8" stroke="#666" stroke-width="1.600"/></svg></div>
    <div class="tab add"><svg viewBox="0 0 16 16" width="16" height="16" fill="none" stroke="#777"><path d="M.5.500h10v10H.5zM5.500.500v10M.5 5.500h10"/><path d="M11 7v8M7 11h8" stroke="#666" stroke-width="1.600"/></svg></div>
    <div class="tab add"><svg viewBox="0 0 16 16" width="16" height="16" fill="none" stroke="#777"><path d="M.5 1.500L4 .5l3 1 3.500-1v10L7 11.500 4 10.500l-3.500 1zM4 .5v10M7 1.500v8"/><path d="M11 7v8M7 11h8" stroke="#666" stroke-width="1.600"/></svg></div>
</div>

<footer class="status">
    <span class="st1">274 marks</span>
    <span class="st2">1 row by 1 column</span>
    <span>SUM(Number of Records): 161.893</span>
    <div class="pager">
        <svg viewBox="0 0 9 9" width="9" height="9" fill="#c2c2c2"><path d="M0 0h1.500v9H0zM8 0v9L2.500 4.500z"/></svg>
        <svg viewBox="0 0 9 9" width="9" height="9" fill="#c2c2c2"><path d="M8 0v9L2 4.500z"/></svg>
        <svg viewBox="0 0 9 9" width="9" height="9" fill="#c2c2c2"><path d="M1 0v9l6-4.500z"/></svg>
        <svg viewBox="0 0 9 9" width="9" height="9" fill="#c2c2c2"><path d="M1 0v9l5.500-4.500zM7.500 0H9v9H7.500z"/></svg>
    </div>
    <div class="views">
        <svg viewBox="0 0 12 11" width="12" height="11" fill="#bdbdbd"><path d="M0 0h3v3H0zM4.500 0h3v3h-3zM9 0h3v3H9zM0 4h3v3H0zM4.500 4h3v3h-3zM9 4h3v3H9zM0 8h3v3H0zM4.500 8h3v3h-3zM9 8h3v3H9z"/></svg>
        <svg viewBox="0 0 12 11" width="12" height="11" fill="#b0b0b0"><path d="M0 0h12v7H0zM0 8h3v3H0zM4.500 8h3v3h-3zM9 8h3v3H9z"/></svg>
        <svg viewBox="0 0 12 11" width="12" height="11" fill="#666"><path d="M0 0h12v11H0z"/></svg>
    </div>
</footer>
</body>
</html>
```

FILE: styles.css
```css
* {
    box-sizing: border-box;
}

html, body {
    margin: 0;
    height: 990px;
    overflow: hidden;
}

body {
    display: flex;
    flex-direction: column;
    font-family: Lato, "Open Sans", sans-serif;
    font-size: 13px;
    color: #444;
    background-color: #f5f5f5;
}

.defs { position: absolute; }

ul { list-style: none; margin: 0; padding: 0; }

/* top window chrome */
.titlebar {
    height: 38px;
    flex: none;
    display: flex;
    align-items: center;
    padding-left: 9px;
    padding-bottom: 2px;
    background-color: #fff;
}

.app-title {
    margin-left: 6px;
    font-size: 15px;
    color: #a0a0a0;
}

.win-btns {
    margin-left: auto;
    display: flex;
    gap: 45px;
    padding-right: 21px;
}

.menubar {
    height: 19px;
    flex: none;
    display: flex;
    gap: 16.900px;
    padding-left: 7px;
    align-items: center;
    font-size: 11.500px;
    color: #999;
    background-color: #fff;
}

.toolbar {
    height: 41px;
    flex: none;
    display: flex;
    align-items: center;
    padding-left: 7px;
    background-color: #f5f5f5;
}

.tb {
    height: 30px;
    flex: none;
    display: flex;
    align-items: center;
    justify-content: center;
}

.w6 { width: 6px; }
.w8 { width: 8px; }
.w12 { width: 12px; }
.w16 { width: 16px; }
.w22 { width: 22px; }
.w26 { width: 26px; }
.w28 { width: 28px; }
.w30 { width: 30px; }
.w32 { width: 32px; }
.w33 { width: 33px; }
.w34 { width: 34px; }
.w38 { width: 38px; }
.ml9 { margin-left: 9px; }

.picked { background-color: #e4e4e4; }

.sep {
    width: 1px;
    height: 33px;
    flex: none;
    background-color: #d4d4d4;
}

.s1 { margin: 0 6px 0 9px; }
.s2 { margin: 0 4px 0 7px; }
.s3 { margin: 0 5px; }
.s4 { margin: 0 8px 0 7px; }
.s5 { margin: 0 8px 0 16px; }
.s6 { margin: 0 7px 0 12px; }

.caret {
    display: block;
    width: 0;
    height: 0;
    flex: none;
    border-left: 3.500px solid transparent;
    border-right: 3.500px solid transparent;
    border-top: 3.500px solid #666;
}

.caret.off { border-top-color: #c4c4c4; }

.fit-select {
    width: 103px;
    height: 23px;
    flex: none;
    margin-left: 8px;
    display: flex;
    align-items: center;
    justify-content: flex-end;
    padding-right: 5px;
    border: 1px solid #dcdcdc;
    border-radius: 2px;
    background-color: #f0f0f0;
}

.show-me {
    margin-left: auto;
    padding-right: 26px;
    display: flex;
    align-items: center;
    gap: 6px;
    font-size: 13px;
    color: #444;
}

/* main area */
.workspace {
    height: 841px;
    flex: none;
    display: flex;
}

.side {
    width: 209px;
    flex: none;
    display: flex;
    flex-direction: column;
    background-color: #fff;
    border-right: 1px solid #d4d4d4;
}

.side-tabs {
    height: 27px;
    flex: none;
    display: flex;
}

.side-tab {
    display: flex;
    align-items: center;
    font-size: 13.500px;
}

.side-tab.active {
    width: 77px;
    padding-left: 17px;
    font-weight: bold;
    color: #333;
}

.side-tab + .side-tab {
    flex: 1;
    padding-left: 12px;
    background-color: #f5f5f5;
    border-left: 1px solid #d4d4d4;
    border-bottom: 1px solid #d4d4d4;
}

.updown {
    margin-left: auto;
    margin-right: 8px;
}

.source {
    height: 30px;
    flex: none;
    display: flex;
    align-items: center;
    gap: 6px;
    padding-left: 21px;
    font-size: 12.500px;
    color: #666;
    border-bottom: 1px solid #e0e0e0;
}

.pane-head {
    height: 26px;
    flex: none;
    display: flex;
    align-items: center;
    padding-left: 17px;
    padding-right: 8px;
    padding-bottom: 2px;
    gap: 8px;
    font-size: 14px;
    color: #333;
}

.pane-head b { margin-right: auto; }

.pane-sep {
    width: 1px;
    height: 17px;
    background-color: #e0e0e0;
}

.pane-head.measures {
    border-top: 1px solid #e0e0e0;
    height: 25px;
    padding-bottom: 4px;
}

.tree.dims { height: 560px; flex: none; }
.tree.meas { flex: 1; }

.tree li {
    height: 21px;
    display: flex;
    align-items: center;
    padding-left: 61px;
    padding-top: 1px;
    position: relative;
    white-space: nowrap;
    font-size: 12.500px;
    color: #444;
}

.tree .group {
    padding-left: 46px;
    padding-top: 0;
    font-weight: bold;
    font-size: 13px;
    color: #333;
}

.tree .top { padding-left: 46px; }

.tree .gen {
    padding-top: 0;
    font-style: italic;
    font-size: 13.600px;
}

.typ {
    position: absolute;
    left: 31px;
    width: 24px;
    text-align: center;
    font-style: normal;
    font-size: 9.500px;
    font-weight: bold;
    color: #4b8aa3;
    display: flex;
    justify-content: center;
    align-items: center;
}

.top .typ { left: 16px; }
.typ.geo { color: #4aa88a; }
.typ.big-sym { font-size: 13px; font-weight: normal; }

.typ-ico { width: 14px; height: 14px; }
.typ-ico.small { width: 12px; height: 12px; }

.chev {
    position: absolute;
    left: 7px;
    top: 6px;
    width: 6px;
    height: 6px;
    border-right: 1px solid #777;
    border-bottom: 1px solid #777;
    transform: rotate(45deg);
}

.grp-ico {
    position: absolute;
    left: 22px;
    top: 5px;
    width: 12px;
    height: 12px;
}

/* cards column */
.cards {
    width: 284px;
    flex: none;
    margin: 0 6px;
    display: flex;
    flex-direction: column;
    gap: 6px;
}

.card {
    background-color: #fafafa;
    border: 1px solid #d4d4d4;
    padding: 7px 6px;
    flex: none;
}

.card h4 {
    margin: 0;
    font-size: 12.500px;
    font-weight: normal;
    color: #555;
}

.pages { height: 62px; }
.filters { height: 78px; padding-right: 4px; padding-left: 4px; }
.filters h4 { padding-left: 2px; margin-bottom: 10px; }
.marks { height: 252px; padding-top: 8px; }

.pill {
    height: 20px;
    line-height: 19px;
    padding-left: 11px;
    border-radius: 10px;
    font-size: 13.200px;
    color: #fff;
    white-space: nowrap;
}

.pill.blue { background-color: #4996b2; }
.pill.green { background-color: #00b180; }

.mark-type {
    height: 20px;
    margin-top: 13px;
    display: flex;
    align-items: center;
    gap: 3px;
    padding-left: 8px;
    padding-right: 5px;
    font-size: 11.500px;
    color: #666;
    background-color: #fff;
    border: 1px solid #d4d4d4;
    border-radius: 2px;
}

.mark-type .caret { margin-left: auto; }

.mark-btns {
    margin-top: 6px;
    display: grid;
    grid-template-columns: repeat(3, 86px);
    grid-auto-rows: 42px;
    gap: 6px;
}

.mark-btn {
    display: flex;
    flex-direction: column;
    align-items: center;
    justify-content: flex-end;
    gap: 3px;
    padding-bottom: 2px;
    border: 1px solid #d4d4d4;
    font-size: 11.500px;
    color: #444;
}

.mark-row {
    height: 20px;
    margin-top: 3px;
    display: flex;
    align-items: center;
    padding-left: 7px;
    gap: 3px;
}

.mark-btns + .mark-row { margin-top: 9px; }

.mark-row .pill { flex: 1; margin-right: 4px; }

/* shelves + sheet */
.view {
    flex: 1;
    min-width: 0;
    padding-right: 4px;
    display: flex;
    flex-direction: column;
    gap: 7px;
}

.shelf {
    height: 27px;
    flex: none;
    display: flex;
    align-items: center;
    gap: 2px;
    background-color: #fafafa;
    border: 1px solid #d4d4d4;
}

.shelf.rows {
    height: 28px;
    border-color: #aaa;
}

.shelf-label {
    width: 125px;
    height: 100%;
    display: flex;
    align-items: center;
    gap: 7px;
    padding-left: 7px;
    padding-right: 8px;
    font-size: 12.500px;
    color: #555;
    border-right: 1px solid #d4d4d4;
}

.rows .shelf-label { gap: 5px; padding-bottom: 1px; }
.shelf-label .caret { margin-left: auto; }
.shelf .pill { width: 148px; }

.canvas {
    flex: 1;
    display: flex;
    gap: 6px;
    margin-top: -1px;
    padding-bottom: 6px;
    min-height: 0;
}

.sheet {
    width: 875px;
    flex: none;
    background-color: #fff;
    border: 1px solid #d4d4d4;
    padding: 0 6px;
}

.sheet h2 {
    height: 44px;
    margin: 0;
    padding: 12px 0 0 4px;
    font-size: 21px;
    font-weight: 300;
    color: #555;
}

.map { display: block; }
.map path, .map polygon { vector-effect: non-scaling-stroke; }

.water { fill: #c2d3d4; stroke: #b8c4c4; }
.pier { fill: none; stroke: #bcbcbc; stroke-width: 2; }

.hw { fill: none; stroke: #cfcfcf; stroke-width: 2.600; }
.rd { fill: none; stroke: #d6d6d6; stroke-width: 1; }
.state { fill: none; stroke: #666; stroke-width: 1; stroke-dasharray: 3 3; }

.labels text {
    font-size: 11.700px;
    fill: #8a8a8a;
    stroke: #ededed;
    stroke-width: 2px;
    paint-order: stroke;
}

.shields rect { fill: #fff; stroke: #d0d0d0; }

.shields text {
    font-size: 9px;
    fill: #888;
    text-anchor: middle;
}

.shields .on-int { fill: #fff; }

.beats { opacity: .85; }

.beats polygon {
    stroke: #5e5e5e;
    stroke-width: 1.200;
    stroke-linejoin: round;
}

.c1 { fill: #f3d26f; }
.c2 { fill: #f3bb5e; }
.c3 { fill: #f8ab58; }
.c4 { fill: #fb974f; }
.c5 { fill: #f78451; }
.c6 { fill: #ea6f4e; }
.c7 { fill: #e1604d; }
.c8 { fill: #d14e4a; }
.c9 { fill: #b92346; }
.big { fill: #f3bf62; }

.squig { fill: none; stroke: #5e5e5e; stroke-width: 1; }
.conn { fill: none; stroke: #5e5e5e; stroke-width: 2; }
.stub { fill: none; stroke: #999; stroke-width: 1; }

.osm {
    font-family: "Liberation Sans", Arial, sans-serif;
    font-size: 10.500px;
    fill: #555;
}

/* legends */
.legends {
    width: 154px;
    flex: none;
    display: flex;
    flex-direction: column;
    gap: 7px;
}

.legend {
    flex: none;
    overflow: hidden;
    background-color: #fff;
    border: 1px solid #d4d4d4;
}

.filter-legend { height: 645px; }
.color-legend { height: 71px; }

.legend-head {
    height: 29px;
    line-height: 29px;
    padding-left: 6px;
    font-size: 13px;
    color: #555;
    background-color: #f8f8f8;
    white-space: nowrap;
}

.color-legend .legend-head { font-size: 12.700px; }

.checks { padding-top: 3px; }

.checks li {
    height: 19px;
    display: flex;
    align-items: center;
    gap: 6px;
    padding-left: 6px;
    font-size: 12px;
    color: #4a4a4a;
    white-space: nowrap;
}

.checks .hot { background-color: #d5d5d5; }

.chk {
    width: 15px;
    height: 15px;
    flex: none;
    position: relative;
    border: 1px solid #777;
    border-radius: 2px;
    background-color: #fff;
}

.chk::after {
    content: "";
    position: absolute;
    left: 4px;
    top: 1px;
    width: 5px;
    height: 9px;
    border-right: 1.500px solid #777;
    border-bottom: 1.500px solid #777;
    transform: rotate(40deg);
}

.ramp {
    height: 16px;
    margin: 4px 4px 0;
    border: 1px solid #a8a38f;
    background: linear-gradient(to right,
        #f3d26f 0 10%, #f3bb5e 10% 20%, #fbab58 20% 30%, #fb974f 30% 40%, #f78451 40% 50%,
        #ea6f4e 50% 60%, #e1604d 60% 70%, #d14e4a 70% 80%, #c73c48 80% 90%, #b92346 90%);
}

.ramp-vals {
    display: flex;
    justify-content: space-between;
    padding: 2px 5px 0 4px;
    font-size: 12.500px;
}

/* bottom */
.tabs {
    height: 30px;
    flex: none;
    display: flex;
    background-color: #e6e6e6;
    border-top: 1px solid #d4d4d4;
}

.tab {
    display: flex;
    align-items: center;
    justify-content: center;
    gap: 6px;
    font-size: 12.500px;
    color: #888;
    border-right: 1px solid #d4d4d4;
}

.tab.src { width: 130px; justify-content: flex-start; padding-left: 9px; }
.tab.sh { width: 56.500px; }
.tab.sh:first-of-type { width: 56px; }
.tab.add { width: 32px; }

.tab.active {
    background-color: #fafafa;
    font-weight: bold;
    color: #555;
}

.status {
    height: 21px;
    flex: none;
    display: flex;
    align-items: center;
    padding-left: 2px;
    font-size: 11.500px;
    color: #555;
    background-color: #eeeeee;
}

.st1 { width: 70px; }
.st2 { width: 106px; font-size: 11px; }

.pager {
    margin-left: auto;
    height: 100%;
    display: flex;
    align-items: center;
    gap: 6px;
    padding: 0 8px;
    border-left: 1px solid #d4d4d4;
    border-right: 1px solid #d4d4d4;
}

.views {
    display: flex;
    align-items: center;
    gap: 9px;
    padding: 0 4px 0 8px;
}
```
